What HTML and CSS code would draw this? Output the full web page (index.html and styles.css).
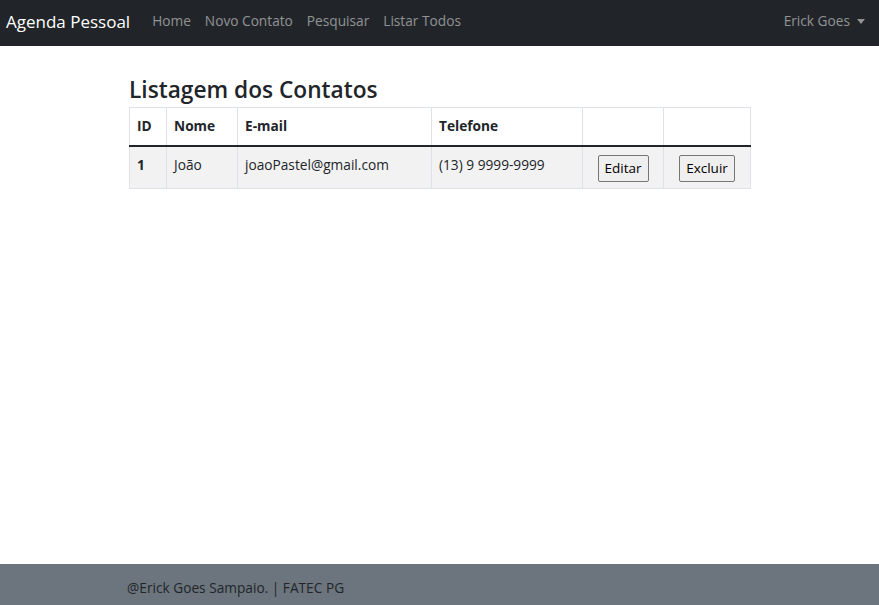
FILE: index.html
```html
<!DOCTYPE html>
<html lang="pt-br">
<head>
<meta charset="utf-8">
<title>Agenda Pessoal</title>
<link rel="stylesheet" href="styles.css">
</head>
<body>
<div class="page">
  <nav class="navbar">
    <a class="brand" href="#">Agenda Pessoal</a>
    <ul class="nav-links">
      <li><a href="#">Home</a></li>
      <li><a href="#">Novo Contato</a></li>
      <li><a href="#">Pesquisar</a></li>
      <li><a href="#">Listar Todos</a></li>
    </ul>
    <a class="user" href="#">Erick Goes <span class="caret"></span></a>
  </nav>
  <main class="container">
    <h2 class="title">Listagem dos Contatos</h2>
    <table class="table">
      <thead>
        <tr>
          <th class="c-id">ID</th>
          <th class="c-nome">Nome</th>
          <th class="c-email">E-mail</th>
          <th class="c-tel">Telefone</th>
          <th class="c-edit"></th>
          <th class="c-del"></th>
        </tr>
      </thead>
      <tbody>
        <tr>
          <th>1</th>
          <td>João</td>
          <td>joaoPastel@gmail.com</td>
          <td>(13) 9 9999-9999</td>
          <td class="btn-cell"><button class="btn">Editar</button></td>
          <td class="btn-cell"><button class="btn">Excluir</button></td>
        </tr>
      </tbody>
    </table>
  </main>
  <footer class="footer">
    <div class="footer-inner">@Erick Goes Sampaio. | FATEC PG</div>
  </footer>
</div>
</body>
</html>
```
FILE: styles.css
```css
* { box-sizing: border-box; }
html, body { margin: 0; padding: 0; height: 100%; }
body {
  font-family: "Open Sans", "Noto Sans", sans-serif;
  font-size: 13.7px;
  line-height: 1.5;
  color: #212529;
  background: #fff;
}
.page { min-height: 100%; display: flex; flex-direction: column; }
a { text-decoration: none; }

.navbar {
  height: 46px;
  background: #212529;
  display: flex;
  align-items: center;
  padding: 0 14px 3px 6px;
}
.brand { color: #fff; font-size: 17px; margin-right: 15px; }
.nav-links { list-style: none; margin: 0; padding: 0; display: flex; flex: 1; }
.nav-links a { display: block; padding: 0 7px; color: rgba(255,255,255,.5); }
.user { color: rgba(255,255,255,.5); display: flex; align-items: center; }
.caret {
  display: inline-block;
  margin-left: 7px;
  width: 0; height: 0;
  border-left: 4.5px solid transparent;
  border-right: 4.5px solid transparent;
  border-top: 5px solid rgba(255,255,255,.5);
}

.container { flex: 1; width: 621px; margin: 0 auto; padding-top: 30px; }
.title { font-size: 22.7px; font-weight: 600; margin: 0 0 4px; line-height: 1.2; }

.table { border-collapse: collapse; width: 621px; table-layout: fixed; }
.table th, .table td {
  border: 1px solid #dee2e6;
  padding: 0 7px;
  text-align: left;
  vertical-align: middle;
}
.table thead th { height: 38px; border-bottom: 2px solid #212529; font-weight: 700; }
.table tbody tr { background: #f2f2f2; height: 43px; }
.table tbody th, .table tbody td { vertical-align: top; padding-top: 8px; }
.table tbody th { font-weight: 700; }
.c-id { width: 37px; }
.c-nome { width: 71px; }
.c-email { width: 194px; }
.c-tel { width: 151px; }
.c-edit { width: 81px; }
.c-del { width: 87px; }
.btn-cell { text-align: center !important; }
.btn {
  font-family: inherit;
  font-size: 13.5px;
  color: #000;
  background: #efefef;
  border: 1px solid #767676;
  border-radius: 2px;
  padding: 3px 6px;
  line-height: 1.4;
  vertical-align: top;
}

.footer { background: #6c757d; height: 41px; display: flex; align-items: center; }
.footer-inner { width: 625px; margin: 0 auto; padding-top: 8px; color: #212529; }
```
